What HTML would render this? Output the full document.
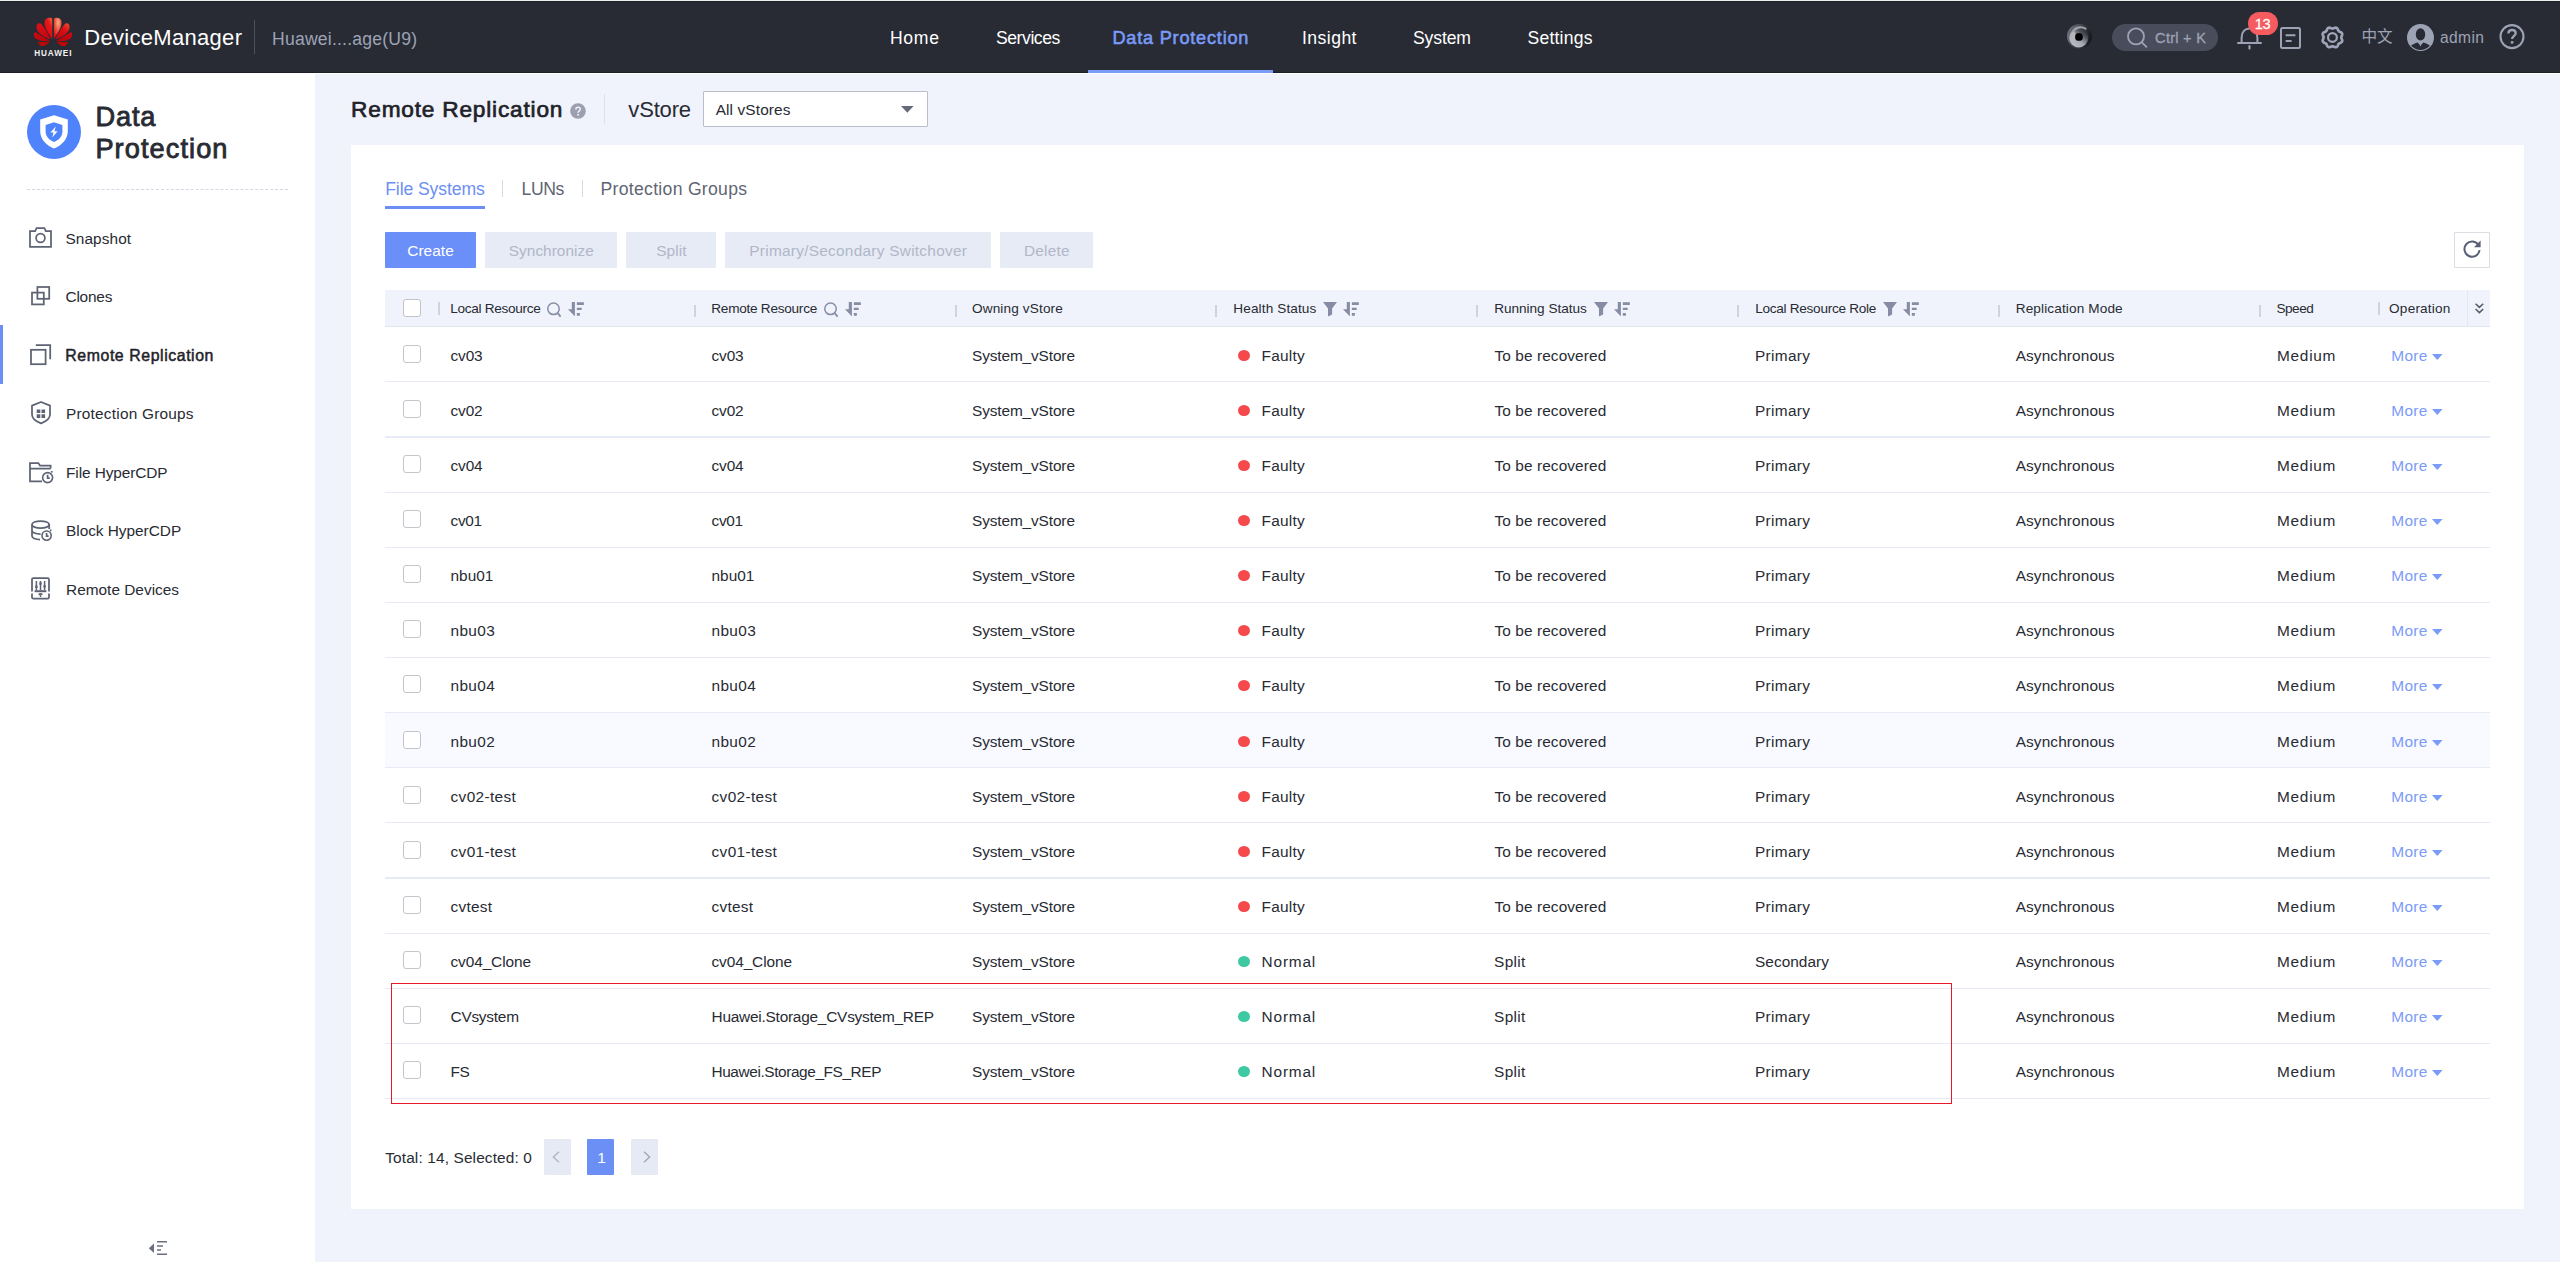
<!DOCTYPE html>
<html lang="en"><head><meta charset="utf-8"><title>DeviceManager - Remote Replication</title>
<style>
*{box-sizing:border-box;margin:0;padding:0}
html,body{width:2560px;height:1262px;overflow:hidden;background:#f0f3fb;font-family:"Liberation Sans","Noto Sans CJK SC",sans-serif;color:#282b33}
.t{position:absolute;white-space:nowrap;line-height:1}
.abs{position:absolute}
#top{position:absolute;left:0;top:0;width:2560px;height:73px;background:#282b34;border-bottom:1px solid #1c1f29}
#side{position:absolute;left:0;top:73px;width:315px;height:1189px;background:#fff}
#card{position:absolute;left:351px;top:145px;width:2173px;height:1064px;background:#fff}
.btn{position:absolute;top:232px;height:36px;border-radius:1px;background:#e6ebf5}
.hsep{position:absolute;top:302px;width:1.5px;height:13px;background:#cfd3df}
.hdr{position:absolute;left:385px;top:290px;width:2105px;height:37px;background:#f0f3fb;border-bottom:1px solid #e1e6f2}
.row{position:absolute;left:385px;width:2105px;border-bottom:1px solid #e6eaf5}
.cb{position:absolute;left:403px;width:18px;height:18px;border:1px solid #c4c5ca;border-radius:3px;background:#fff}
.dot{position:absolute;width:12.4px;height:11.6px;border-radius:50%}
svg{position:absolute;overflow:visible}
</style></head><body>

<header>
<div id="top"></div><div class="abs" style="left:0;top:0;width:2560px;height:1px;background:#eeefef"></div><div class="abs" style="left:0;top:1px;width:2560px;height:1px;background:#1d202a"></div><div class="abs" style="left:315px;top:73px;width:2245px;height:1px;background:#fff"></div>
<svg style="left:0;top:0" width="100" height="73" viewBox="0 0 100 73">
<defs>
<linearGradient id="g1" x1=".9" y1="0" x2=".3" y2=".8"><stop offset="0" stop-color="#f0603a"/><stop offset=".4" stop-color="#e8161a"/><stop offset="1" stop-color="#dc0812"/></linearGradient>
<radialGradient id="g1r" cx=".45" cy=".22" r=".75"><stop offset="0" stop-color="#f8ac90"/><stop offset=".4" stop-color="#ee6a48"/><stop offset="1" stop-color="#e40c14"/></radialGradient>
<linearGradient id="g2" x1="0" y1="0" x2=".6" y2="1"><stop offset="0" stop-color="#e01018"/><stop offset="1" stop-color="#c4060e"/></linearGradient>
<linearGradient id="g2r" x1="0" y1="0" x2=".6" y2="1"><stop offset="0" stop-color="#ee5430"/><stop offset=".45" stop-color="#e00e16"/><stop offset="1" stop-color="#c8060e"/></linearGradient>
<linearGradient id="g3" x1="0" y1="0" x2="1" y2="1"><stop offset="0" stop-color="#cc0a10"/><stop offset="1" stop-color="#b4040a"/></linearGradient>
<linearGradient id="g4" x1="0" y1="0" x2="0" y2="1"><stop offset="0" stop-color="#a80606"/><stop offset="1" stop-color="#cc0a0a"/></linearGradient>
</defs>
<path fill="url(#g1)" d="M52.2 38.9 C47.5 32 43.2 25.5 44.9 20.6 C45.8 18.2 48.5 17.3 51.3 18.1 C52.1 18.4 52.3 19 52.2 20 Z"/>
<path fill="url(#g2)" d="M50.7 39.4 C43.5 37.4 36.8 32.8 36.6 27.6 C36.3 25.4 37.3 23.7 39 23.2 C40.2 23 41 23.4 41.8 24.4 C45 28.6 48.6 33.8 50.7 39.4 Z"/>
<path fill="url(#g3)" d="M50 41.1 C43 41.9 36 40.4 34.3 36.4 C33.6 34.9 33.8 33.4 34.5 32.5 C35.3 32.2 36 32.4 36.8 32.9 C41 35.4 45.8 38 50 41.1 Z"/>
<path fill="url(#g4)" d="M49.7 41.4 C47.6 44.4 44.6 46.2 42 46 C40.4 45.8 38.8 44 37.8 41.9 C41.6 42.2 45.8 42 49.7 41.4 Z"/>
<g transform="translate(106.1,0) scale(-1,1)">
<path fill="url(#g1r)" d="M52.2 38.9 C47.5 32 43.2 25.5 44.9 20.6 C45.8 18.2 48.5 17.3 51.3 18.1 C52.1 18.4 52.3 19 52.2 20 Z"/>
<path fill="url(#g2r)" d="M50.7 39.4 C43.5 37.4 36.8 32.8 36.6 27.6 C36.3 25.4 37.3 23.7 39 23.2 C40.2 23 41 23.4 41.8 24.4 C45 28.6 48.6 33.8 50.7 39.4 Z"/>
<path fill="url(#g3)" d="M50 41.1 C43 41.9 36 40.4 34.3 36.4 C33.6 34.9 33.8 33.4 34.5 32.5 C35.3 32.2 36 32.4 36.8 32.9 C41 35.4 45.8 38 50 41.1 Z"/>
<path fill="url(#g4)" d="M49.7 41.4 C47.6 44.4 44.6 46.2 42 46 C40.4 45.8 38.8 44 37.8 41.9 C41.6 42.2 45.8 42 49.7 41.4 Z"/>
</g>
</svg>
<span class="t " style="left:34.20px;top:50px;font-size:8.2px;color:#f2f2f2;letter-spacing:0.900px;font-weight:bold;">HUAWEI</span>
<span class="t " style="left:84.30px;top:27px;font-size:22px;color:#fff;letter-spacing:0.299px;">DeviceManager</span>
<div class="abs" style="left:254px;top:20px;width:1px;height:34px;background:#4d505b"></div>
<span class="t " style="left:272.00px;top:31px;font-size:17.6px;color:#9da3b5;letter-spacing:0.209px;">Huawei....age(U9)</span>
<span class="t " style="left:890.00px;top:30px;font-size:17.6px;color:#fff;letter-spacing:0.669px;">Home</span>
<span class="t " style="left:996.00px;top:30px;font-size:17.6px;color:#fff;letter-spacing:-0.450px;">Services</span>
<span class="t " style="left:1302.00px;top:30px;font-size:17.6px;color:#fff;letter-spacing:0.445px;">Insight</span>
<span class="t " style="left:1413.00px;top:30px;font-size:17.6px;color:#fff;letter-spacing:-0.139px;">System</span>
<span class="t " style="left:1527.50px;top:30px;font-size:17.6px;color:#fff;letter-spacing:0.197px;">Settings</span>
<span class="t " style="left:1112.40px;top:29px;font-size:18.13px;color:#7a9bf8;letter-spacing:0.802px;-webkit-text-stroke:0.56px #7a9bf8;">Data Protection</span>
<div class="abs" style="left:1088px;top:70px;width:185px;height:3px;background:#7a9bf8"></div>
<svg style="left:2066px;top:23px" width="27" height="27" viewBox="0 0 27 27">
<defs><linearGradient id="eo" x1="0" y1=".35" x2="1" y2=".65"><stop offset="0" stop-color="#70727c"/><stop offset=".55" stop-color="#3c3e47"/><stop offset="1" stop-color="#121317"/></linearGradient>
<linearGradient id="ei" x1=".1" y1=".9" x2=".85" y2=".1"><stop offset="0" stop-color="#c0c0ce"/><stop offset=".45" stop-color="#a4a5b2"/><stop offset=".8" stop-color="#4a4c56"/><stop offset="1" stop-color="#2e3039"/></linearGradient>
<filter id="eb" x="-20%" y="-20%" width="140%" height="140%"><feGaussianBlur stdDeviation=".45"/></filter></defs>
<g filter="url(#eb)"><circle cx="13.4" cy="13.3" r="12.4" fill="url(#eo)"/>
<circle cx="12.8" cy="14.8" r="9.6" fill="url(#ei)"/>
<path d="M6.4 9.4 A 9.2 9.2 0 0 1 19.4 5.6" fill="none" stroke="#9fa0a8" stroke-width="2.2" stroke-linecap="round"/>
<path d="M6.2 9.6 C8.6 7.4 10 10.6 9 13 C8 16 7.6 19 9.2 21.6 C5 19.4 3.6 13.6 6.2 9.6 Z" fill="#b6b6ba"/>
<circle cx="13" cy="13.9" r="3.9" fill="#020203"/></g></svg>
<div class="abs" style="left:2112px;top:24px;width:106px;height:27px;border-radius:14px;background:#494d5b"></div>
<svg style="left:2126px;top:27px" width="22" height="22" viewBox="0 0 22 22"><circle cx="10" cy="9.4" r="8" fill="none" stroke="#9da3b5" stroke-width="1.8"/><path d="M15.6 15.2 L20.4 19.8" stroke="#9da3b5" stroke-width="1.8" stroke-linecap="round"/></svg>
<span class="t " style="left:2155.10px;top:31px;font-size:14.6px;color:#9da3b5;letter-spacing:0.249px;-webkit-text-stroke:.3px #9da3b5;">Ctrl + K</span>
<svg style="left:2237px;top:26px" width="26" height="25" viewBox="0 0 26 25"><path d="M4.6 16.8 V11.5 C4.6 6 8 2.4 12.5 2.4 C17 2.4 20.4 6 20.4 11.5 V16.8" fill="none" stroke="#9da3b5" stroke-width="2"/><path d="M1 17 H24" stroke="#9da3b5" stroke-width="2" stroke-linecap="round"/><path d="M12.5 20 V22.6" stroke="#9da3b5" stroke-width="2.2" stroke-linecap="round"/></svg>
<div class="abs" style="left:2248px;top:11.5px;width:29.5px;height:23.5px;border-radius:12px;background:#f55b5f"></div>
<span class="t " style="left:2254.80px;top:17px;font-size:14.6px;color:#fff;letter-spacing:-0.450px;-webkit-text-stroke:.3px #fff;">13</span>
<svg style="left:2280px;top:27px" width="21" height="22" viewBox="0 0 21 22"><rect x="1" y="1" width="19" height="20" rx="1.5" fill="none" stroke="#9da3b5" stroke-width="2"/><path d="M5.6 8.2 H15.4 M5.6 14 H11.6" stroke="#9da3b5" stroke-width="2"/></svg>
<svg style="left:2320px;top:25px" width="25" height="25" viewBox="0 0 25 25"><path d="M12.45 3.55 L12.80 3.52 L13.16 3.43 L13.53 3.30 L13.92 3.15 L14.33 2.99 L14.76 2.84 L15.19 2.74 L15.62 2.70 L16.04 2.73 L16.43 2.84 L16.79 3.04 L17.11 3.31 L17.38 3.65 L17.61 4.02 L17.81 4.43 L17.99 4.83 L18.15 5.22 L18.32 5.57 L18.52 5.89 L18.74 6.16 L19.01 6.38 L19.33 6.58 L19.68 6.75 L20.07 6.91 L20.47 7.09 L20.88 7.29 L21.25 7.52 L21.59 7.79 L21.86 8.11 L22.06 8.47 L22.17 8.86 L22.20 9.28 L22.16 9.71 L22.06 10.14 L21.91 10.57 L21.75 10.98 L21.60 11.37 L21.47 11.74 L21.38 12.10 L21.35 12.45 L21.38 12.80 L21.47 13.16 L21.60 13.53 L21.75 13.92 L21.91 14.33 L22.06 14.76 L22.16 15.19 L22.20 15.62 L22.17 16.04 L22.06 16.43 L21.86 16.79 L21.59 17.11 L21.25 17.38 L20.88 17.61 L20.47 17.81 L20.07 17.99 L19.68 18.15 L19.33 18.32 L19.01 18.52 L18.74 18.74 L18.52 19.01 L18.32 19.33 L18.15 19.68 L17.99 20.07 L17.81 20.47 L17.61 20.88 L17.38 21.25 L17.11 21.59 L16.79 21.86 L16.43 22.06 L16.04 22.17 L15.62 22.20 L15.19 22.16 L14.76 22.06 L14.33 21.91 L13.92 21.75 L13.53 21.60 L13.16 21.47 L12.80 21.38 L12.45 21.35 L12.10 21.38 L11.74 21.47 L11.37 21.60 L10.98 21.75 L10.57 21.91 L10.14 22.06 L9.71 22.16 L9.28 22.20 L8.86 22.17 L8.47 22.06 L8.11 21.86 L7.79 21.59 L7.52 21.25 L7.29 20.88 L7.09 20.47 L6.91 20.07 L6.75 19.68 L6.58 19.33 L6.38 19.01 L6.16 18.74 L5.89 18.52 L5.57 18.32 L5.22 18.15 L4.83 17.99 L4.43 17.81 L4.02 17.61 L3.65 17.38 L3.31 17.11 L3.04 16.79 L2.84 16.43 L2.73 16.04 L2.70 15.62 L2.74 15.19 L2.84 14.76 L2.99 14.33 L3.15 13.92 L3.30 13.53 L3.43 13.16 L3.52 12.80 L3.55 12.45 L3.52 12.10 L3.43 11.74 L3.30 11.37 L3.15 10.98 L2.99 10.57 L2.84 10.14 L2.74 9.71 L2.70 9.28 L2.73 8.86 L2.84 8.47 L3.04 8.11 L3.31 7.79 L3.65 7.52 L4.02 7.29 L4.43 7.09 L4.83 6.91 L5.22 6.75 L5.57 6.58 L5.89 6.38 L6.16 6.16 L6.38 5.89 L6.58 5.57 L6.75 5.22 L6.91 4.83 L7.09 4.43 L7.29 4.02 L7.52 3.65 L7.79 3.31 L8.11 3.04 L8.47 2.84 L8.86 2.73 L9.28 2.70 L9.71 2.74 L10.14 2.84 L10.57 2.99 L10.98 3.15 L11.37 3.30 L11.74 3.43 L12.10 3.52Z" fill="none" stroke="#a0a6b9" stroke-width="2.7" stroke-linejoin="round"/><circle cx="12.45" cy="12.45" r="4.4" fill="none" stroke="#a0a6b9" stroke-width="2.2"/></svg>
<span class="t" style="left:2361.5px;top:29.2px;font-size:15.6px;color:#9da3b5">中文</span>
<svg style="left:2407px;top:24px" width="27" height="27" viewBox="0 0 27 27"><defs><clipPath id="ac"><circle cx="13.5" cy="13.5" r="12.4"/></clipPath></defs><circle cx="13.5" cy="13.5" r="13.5" fill="#9da3b5"/><g clip-path="url(#ac)" fill="#282b36"><ellipse cx="13.5" cy="10.4" rx="4.7" ry="6.2"/><path d="M1 27 C2 21.5 6.5 19.6 10.6 18.4 L13.5 21.5 L16.4 18.4 C20.5 19.6 25 21.5 26 27 Z"/></g><path d="M13.5 18.6 L12.6 19.6 L13.1 22 L13.5 22.6 L13.9 22 L14.4 19.6 Z" fill="#9da3b5"/></svg>
<span class="t " style="left:2440.00px;top:30px;font-size:15.6px;color:#9da3b5;letter-spacing:0.373px;">admin</span>
<svg style="left:2498.5px;top:24px" width="26" height="26" viewBox="0 0 26 26"><circle cx="13" cy="12.6" r="11.5" fill="none" stroke="#9da3b5" stroke-width="2.1"/><path d="M9.4 9.4 C9.4 7.2 11 6 13 6 C15.2 6 16.7 7.4 16.7 9.2 C16.7 11.8 13.1 12 13.1 15" fill="none" stroke="#9da3b5" stroke-width="2.3"/><circle cx="13.1" cy="18.4" r="1.45" fill="#9da3b5"/></svg>
</header>
<aside>
<div id="side"></div>
<svg style="left:27px;top:105px" width="54" height="54" viewBox="0 0 54 54"><circle cx="27" cy="27" r="27" fill="#4f83fc"/>
<path d="M27 10.2 L40.8 14.6 V26 C40.8 34.4 34.6 40.4 27 43.6 C19.4 40.4 13.2 34.4 13.2 26 V14.6 Z" fill="#fff"/>
<path d="M27 17.2 L35.4 20 V26.4 C35.4 31.6 31.6 35 27 37 C22.4 35 18.6 31.6 18.6 26.4 V20 Z" fill="#4f83fc"/>
<path d="M28.8 21.4 L23.4 27.6 H26.6 L25.2 32.4 L30.6 26.2 H27.4 Z" fill="#fff"/></svg>
<span class="t " style="left:95.40px;top:103px;font-size:27.19px;color:#282b33;letter-spacing:0.883px;-webkit-text-stroke:0.84px #282b33;">Data</span>
<span class="t " style="left:95.40px;top:135px;font-size:27.19px;color:#282b33;letter-spacing:1.074px;-webkit-text-stroke:0.84px #282b33;">Protection</span>
<div class="abs" style="left:27px;top:189px;width:261px;height:0;border-top:1px dashed #d3d8e6"></div>
<div class="abs" style="left:0;top:325px;width:3px;height:59px;background:#6c8ff5"></div>
<svg style="left:29px;top:227px" width="23" height="21" viewBox="0 0 23 21"><path d="M1 4.2 H6.2 L7.6 1 H15.4 L16.8 4.2 H22 V19.8 H1 Z" fill="none" stroke="#5d6373" stroke-width="1.75" stroke-linejoin="miter"/><circle cx="11.5" cy="11" r="4.4" fill="none" stroke="#5d6373" stroke-width="1.75"/></svg>
<svg style="left:31px;top:285.5px" width="20" height="20" viewBox="0 0 20 20"><rect x="6.4" y="1" width="11.8" height="11.8" fill="none" stroke="#5d6373" stroke-width="1.75"/><rect x="1" y="6.6" width="11.8" height="11.8" fill="none" stroke="#5d6373" stroke-width="1.75"/></svg>
<svg style="left:29.5px;top:344px" width="22" height="21" viewBox="0 0 22 21"><rect x="1" y="5.8" width="14.6" height="14.4" fill="none" stroke="#5d6373" stroke-width="1.75"/><path d="M5.8 1 H20.2 V15.2" fill="none" stroke="#5d6373" stroke-width="1.75"/></svg>
<svg style="left:30.5px;top:401px" width="20" height="23" viewBox="0 0 20 23"><path d="M10 1 L19 4.6 V13.6 C19 17.8 15 20.6 10 22.4 C5 20.6 1 17.8 1 13.6 V4.6 Z" fill="none" stroke="#5d6373" stroke-width="1.75" stroke-linejoin="round"/><path d="M5.7 8.5h3.6v3.6h-3.6z M10.5 8.5h3.6v3.6h-3.6z M5.7 13.3h3.6v3.6h-3.6z M10.5 13.3h3.6v3.6h-3.6z" fill="#5d6373"/></svg>
<svg style="left:29px;top:461.5px" width="25" height="22" viewBox="0 0 25 22"><path d="M13 19.4 H1 V1 H9.4 L11 3.6 H21.6 V6.6 M1 6.6 H21.6" fill="none" stroke="#5d6373" stroke-width="1.75"/><circle cx="18.6" cy="15.6" r="5" fill="#fff" stroke="#5d6373" stroke-width="1.6"/><path d="M18.6 12.8 V16 H20.8" fill="none" stroke="#5d6373" stroke-width="1.75"/><path d="M22 10 L23.6 9.6" fill="none" stroke="#5d6373" stroke-width="1.75"/></svg>
<svg style="left:30.5px;top:519.5px" width="22" height="22" viewBox="0 0 22 22"><ellipse cx="9.6" cy="4.6" rx="8.6" ry="3.6" fill="none" stroke="#5d6373" stroke-width="1.75"/><path d="M1 4.6 V16 C1 18 4.4 19.6 9 19.6 M18.2 4.6 V9 M1 10.4 C1 12.4 4.6 14 9.6 14" fill="none" stroke="#5d6373" stroke-width="1.75"/><circle cx="15.6" cy="15.6" r="4.6" fill="#fff" stroke="#5d6373" stroke-width="1.6"/><path d="M15.6 13 V16 H17.6" fill="none" stroke="#5d6373" stroke-width="1.75"/><path d="M19 10.6 L20.4 10.2" fill="none" stroke="#5d6373" stroke-width="1.75"/></svg>
<svg style="left:31px;top:577px" width="19" height="23" viewBox="0 0 19 23"><path d="M1 14.6 V2.4 C1 1.6 1.6 1 2.4 1 H16.6 C17.4 1 18 1.6 18 2.4 V14.6 M18 16.4 V20.2 C18 21 17.4 21.6 16.6 21.6 H2.4 C1.6 21.6 1 21 1 20.2 V16.4" fill="none" stroke="#5d6373" stroke-width="1.75"/><path d="M3.6 14.2 H15.4" stroke="#5d6373" stroke-width="2"/><path d="M5.4 4 V13 M9.5 4 V13 M13.6 4 V13" stroke="#5d6373" stroke-width="1.5"/><path d="M4.2 8.6h2.4v2.4h-2.4z M8.3 5.4h2.4v2.4h-2.4z M12.4 8.2h2.4v2.4h-2.4z" fill="#5d6373"/><path d="M7.6 17.6 C8.8 16.6 10.2 16.6 11.4 17.6" fill="none" stroke="#5d6373" stroke-width="1.75" stroke-width="1.3"/><circle cx="9.5" cy="19" r=".9" fill="#5d6373"/></svg>
<span class="t " style="left:65.50px;top:231px;font-size:15.4px;color:#282b33;letter-spacing:0.076px;">Snapshot</span>
<span class="t " style="left:65.50px;top:289px;font-size:15.4px;color:#282b33;letter-spacing:-0.214px;">Clones</span>
<span class="t " style="left:65.30px;top:348px;font-size:15.86px;color:#1f2229;letter-spacing:0.572px;-webkit-text-stroke:0.49px #1f2229;">Remote Replication</span>
<span class="t " style="left:66.00px;top:406px;font-size:15.4px;color:#282b33;letter-spacing:0.217px;">Protection Groups</span>
<span class="t " style="left:66.00px;top:465px;font-size:15.4px;color:#282b33;letter-spacing:-0.085px;">File HyperCDP</span>
<span class="t " style="left:66.00px;top:523px;font-size:15.4px;color:#282b33;letter-spacing:-0.023px;">Block HyperCDP</span>
<span class="t " style="left:66.00px;top:582px;font-size:15.4px;color:#282b33;letter-spacing:0.011px;">Remote Devices</span>
<svg style="left:148px;top:1240px" width="20" height="16" viewBox="0 0 20 16"><path d="M0.8 8.2 L6 3.4 V13 Z" fill="#6b7080"/><path d="M9 1.8 H19 M9 6 H15 M9 10 H13 M9 14.2 H19" stroke="#6b7080" stroke-width="1.6"/></svg>
</aside>
<main>
<span class="t " style="left:351.10px;top:98px;font-size:22.66px;color:#1f2229;letter-spacing:0.799px;-webkit-text-stroke:0.70px #1f2229;">Remote Replication</span>
<svg style="left:570px;top:103px" width="16" height="16" viewBox="0 0 16 16"><circle cx="8" cy="8" r="7.8" fill="#9b9fb0"/><path d="M5.9 6.4 C5.9 5 6.9 4.3 8.1 4.3 C9.4 4.3 10.3 5.1 10.3 6.2 C10.3 7.8 8.1 7.9 8.1 9.7" fill="none" stroke="#f0f3fb" stroke-width="1.5"/><circle cx="8.1" cy="11.8" r=".95" fill="#f0f3fb"/></svg>
<div class="abs" style="left:604px;top:94px;width:1px;height:30px;background:#dde1ec"></div>
<span class="t " style="left:628.30px;top:99px;font-size:22px;color:#282b33;letter-spacing:-0.156px;">vStore</span>
<div class="abs" style="left:703px;top:91px;width:225px;height:36px;background:#fff;border:1px solid #b9bdcc;border-radius:1px"></div>
<span class="t " style="left:715.70px;top:102px;font-size:15.4px;color:#282b33;letter-spacing:0.119px;">All vStores</span>
<svg style="left:900.5px;top:105.5px" width="13" height="7" viewBox="0 0 13 7"><path d="M0 0 H12.6 L6.3 6.8 Z" fill="#666b7b"/></svg>
<div id="card"></div>
<span class="t " style="left:385.20px;top:181px;font-size:17.6px;color:#6c8ff5;letter-spacing:-0.105px;">File Systems</span>
<div class="abs" style="left:385px;top:206px;width:100px;height:3px;background:#6c8ff5"></div>
<div class="abs" style="left:502px;top:180px;width:1px;height:17px;background:#d5d9e4"></div>
<span class="t " style="left:521.60px;top:181px;font-size:17.6px;color:#5f6572;letter-spacing:-0.450px;">LUNs</span>
<div class="abs" style="left:582px;top:180px;width:1px;height:17px;background:#d5d9e4"></div>
<span class="t " style="left:600.60px;top:181px;font-size:17.6px;color:#5f6572;letter-spacing:0.290px;">Protection Groups</span>
<div class="btn" style="left:385px;width:91px;background:#6b8ff8"></div>
<span class="t " style="left:407.30px;top:243px;font-size:15.4px;color:#fff;letter-spacing:0.040px;">Create</span>
<div class="btn" style="left:485px;width:132px;background:#e6ebf5"></div>
<span class="t " style="left:508.80px;top:243px;font-size:15.4px;color:#b1b7c8;letter-spacing:0.022px;">Synchronize</span>
<div class="btn" style="left:626px;width:90px;background:#e6ebf5"></div>
<span class="t " style="left:656.20px;top:243px;font-size:15.4px;color:#b1b7c8;letter-spacing:0.112px;">Split</span>
<div class="btn" style="left:725px;width:266px;background:#e6ebf5"></div>
<span class="t " style="left:749.30px;top:243px;font-size:15.4px;color:#b1b7c8;letter-spacing:0.266px;">Primary/Secondary Switchover</span>
<div class="btn" style="left:1000px;width:93px;background:#e6ebf5"></div>
<span class="t " style="left:1024.00px;top:243px;font-size:15.4px;color:#b1b7c8;letter-spacing:0.219px;">Delete</span>
<div class="abs" style="left:2454px;top:232px;width:36px;height:36px;border:1px solid #dcdde2;border-radius:1px;background:#fff"></div>
<svg style="left:2462px;top:239px" width="20" height="20" viewBox="0 0 20 20"><path d="M16.6 6.2 A7.6 7.6 0 1 0 17.6 11.2" fill="none" stroke="#596076" stroke-width="2"/><path d="M18.6 1.6 V8.2 H12 Z" fill="#596076"/></svg>
<div class="hdr"></div>
<div class="cb" style="top:299px"></div>
<div class="hsep" style="left:438px;top:302px;height:13px"></div>
<div class="hsep" style="left:694px;top:304.5px;height:12px"></div>
<div class="hsep" style="left:955px;top:304.5px;height:12px"></div>
<div class="hsep" style="left:1215px;top:304.5px;height:12px"></div>
<div class="hsep" style="left:1476px;top:304.5px;height:12px"></div>
<div class="hsep" style="left:1737px;top:304.5px;height:12px"></div>
<div class="hsep" style="left:1998px;top:304.5px;height:12px"></div>
<div class="hsep" style="left:2259px;top:304.5px;height:12px"></div>
<div class="hsep" style="left:2378px;top:302px;height:13px"></div>
<div class="abs" style="left:2467px;top:290px;width:1px;height:36px;background:#e3e7f2"></div>
<span class="t " style="left:450.30px;top:302px;font-size:13.6px;color:#282b33;letter-spacing:-0.302px;">Local Resource</span>
<svg style="left:547.3px;top:301.5px" width="15" height="16" viewBox="0 0 15 16"><circle cx="6.5" cy="6.8" r="5.75" fill="none" stroke="#868ca3" stroke-width="1.5"/><path d="M10.7 11.1 L13.6 14.6" stroke="#868ca3" stroke-width="1.8"/></svg>
<svg style="left:568.1px;top:302px" width="17" height="15" viewBox="0 0 17 15"><path d="M3.8 0.1 H6.9 V13.9 H6.5 L0 7.2 H3.8 Z" fill="#868ca3"/><path d="M8.85 0.3 H15.85 V2.9 H8.85 Z M8.85 5.75 H13.7 V8.1 H8.85 Z M8.85 11.1 H11.85 V13.85 H8.85 Z" fill="#868ca3"/></svg>
<span class="t " style="left:711.30px;top:302px;font-size:13.6px;color:#282b33;letter-spacing:-0.258px;">Remote Resource</span>
<svg style="left:823.7px;top:301.5px" width="15" height="16" viewBox="0 0 15 16"><circle cx="6.5" cy="6.8" r="5.75" fill="none" stroke="#868ca3" stroke-width="1.5"/><path d="M10.7 11.1 L13.6 14.6" stroke="#868ca3" stroke-width="1.8"/></svg>
<svg style="left:844.5px;top:302px" width="17" height="15" viewBox="0 0 17 15"><path d="M3.8 0.1 H6.9 V13.9 H6.5 L0 7.2 H3.8 Z" fill="#868ca3"/><path d="M8.85 0.3 H15.85 V2.9 H8.85 Z M8.85 5.75 H13.7 V8.1 H8.85 Z M8.85 11.1 H11.85 V13.85 H8.85 Z" fill="#868ca3"/></svg>
<span class="t " style="left:972.00px;top:302px;font-size:13.6px;color:#282b33;letter-spacing:0.140px;">Owning vStore</span>
<span class="t " style="left:1233.30px;top:302px;font-size:13.6px;color:#282b33;letter-spacing:0.119px;">Health Status</span>
<svg style="left:1323.0px;top:301.8px" width="14" height="15" viewBox="0 0 14 15"><path d="M0 0 H14 L9.1 6.4 V12.6 L5 14.4 V6.4 Z" fill="#868ca3"/></svg>
<svg style="left:1343.1px;top:302px" width="17" height="15" viewBox="0 0 17 15"><path d="M3.8 0.1 H6.9 V13.9 H6.5 L0 7.2 H3.8 Z" fill="#868ca3"/><path d="M8.85 0.3 H15.85 V2.9 H8.85 Z M8.85 5.75 H13.7 V8.1 H8.85 Z M8.85 11.1 H11.85 V13.85 H8.85 Z" fill="#868ca3"/></svg>
<span class="t " style="left:1494.20px;top:302px;font-size:13.6px;color:#282b33;letter-spacing:-0.025px;">Running Status</span>
<svg style="left:1593.5px;top:301.8px" width="14" height="15" viewBox="0 0 14 15"><path d="M0 0 H14 L9.1 6.4 V12.6 L5 14.4 V6.4 Z" fill="#868ca3"/></svg>
<svg style="left:1613.6px;top:302px" width="17" height="15" viewBox="0 0 17 15"><path d="M3.8 0.1 H6.9 V13.9 H6.5 L0 7.2 H3.8 Z" fill="#868ca3"/><path d="M8.85 0.3 H15.85 V2.9 H8.85 Z M8.85 5.75 H13.7 V8.1 H8.85 Z M8.85 11.1 H11.85 V13.85 H8.85 Z" fill="#868ca3"/></svg>
<span class="t " style="left:1755.20px;top:302px;font-size:13.6px;color:#282b33;letter-spacing:-0.282px;">Local Resource Role</span>
<svg style="left:1883.0px;top:301.8px" width="14" height="15" viewBox="0 0 14 15"><path d="M0 0 H14 L9.1 6.4 V12.6 L5 14.4 V6.4 Z" fill="#868ca3"/></svg>
<svg style="left:1903.1px;top:302px" width="17" height="15" viewBox="0 0 17 15"><path d="M3.8 0.1 H6.9 V13.9 H6.5 L0 7.2 H3.8 Z" fill="#868ca3"/><path d="M8.85 0.3 H15.85 V2.9 H8.85 Z M8.85 5.75 H13.7 V8.1 H8.85 Z M8.85 11.1 H11.85 V13.85 H8.85 Z" fill="#868ca3"/></svg>
<span class="t " style="left:2015.70px;top:302px;font-size:13.6px;color:#282b33;letter-spacing:0.129px;">Replication Mode</span>
<span class="t " style="left:2276.40px;top:302px;font-size:13.6px;color:#282b33;letter-spacing:-0.450px;">Speed</span>
<span class="t " style="left:2389.10px;top:302px;font-size:13.6px;color:#282b33;letter-spacing:0.200px;">Operation</span>
<svg style="left:2475px;top:302.5px" width="9" height="11" viewBox="0 0 9 11"><path d="M0.6 0.8 L4.4 4.4 L8.2 0.8 M0.6 6 L4.4 9.6 L8.2 6" fill="none" stroke="#555a68" stroke-width="1.5"/></svg>
<div class="row" style="top:327px;height:55px;background:#fff;"></div>
<div class="cb" style="top:345px"></div>
<span class="t " style="left:450.50px;top:348px;font-size:15.4px;color:#282b33;letter-spacing:-0.131px;">cv03</span>
<span class="t " style="left:711.50px;top:348px;font-size:15.4px;color:#282b33;letter-spacing:-0.131px;">cv03</span>
<span class="t " style="left:972.00px;top:348px;font-size:15.4px;color:#282b33;letter-spacing:-0.118px;">System_vStore</span>
<div class="dot" style="left:1237.9px;top:349.7px;background:#f5494c"></div>
<span class="t " style="left:1261.60px;top:348px;font-size:15.4px;color:#282b33;letter-spacing:0.227px;">Faulty</span>
<span class="t " style="left:1494.40px;top:348px;font-size:15.4px;color:#282b33;letter-spacing:0.106px;">To be recovered</span>
<span class="t " style="left:1755.00px;top:348px;font-size:15.4px;color:#282b33;letter-spacing:0.324px;">Primary</span>
<span class="t " style="left:2015.70px;top:348px;font-size:15.4px;color:#282b33;letter-spacing:0.113px;">Asynchronous</span>
<span class="t " style="left:2277.00px;top:348px;font-size:15.4px;color:#282b33;letter-spacing:0.731px;">Medium</span>
<span class="t " style="left:2391.30px;top:348px;font-size:15.4px;color:#7b9bf8;letter-spacing:0.296px;">More</span>
<svg style="left:2431.8px;top:353.6px" width="11" height="6" viewBox="0 0 11 6"><path d="M0 0 H10.6 L5.3 6 Z" fill="#7b9bf8"/></svg>
<div class="row" style="top:382px;height:56px;background:#fff;border-bottom:2px solid #e7ebf6;"></div>
<div class="cb" style="top:400px"></div>
<span class="t " style="left:450.50px;top:403px;font-size:15.4px;color:#282b33;letter-spacing:-0.131px;">cv02</span>
<span class="t " style="left:711.50px;top:403px;font-size:15.4px;color:#282b33;letter-spacing:-0.131px;">cv02</span>
<span class="t " style="left:972.00px;top:403px;font-size:15.4px;color:#282b33;letter-spacing:-0.118px;">System_vStore</span>
<div class="dot" style="left:1237.9px;top:404.7px;background:#f5494c"></div>
<span class="t " style="left:1261.60px;top:403px;font-size:15.4px;color:#282b33;letter-spacing:0.227px;">Faulty</span>
<span class="t " style="left:1494.40px;top:403px;font-size:15.4px;color:#282b33;letter-spacing:0.106px;">To be recovered</span>
<span class="t " style="left:1755.00px;top:403px;font-size:15.4px;color:#282b33;letter-spacing:0.324px;">Primary</span>
<span class="t " style="left:2015.70px;top:403px;font-size:15.4px;color:#282b33;letter-spacing:0.113px;">Asynchronous</span>
<span class="t " style="left:2277.00px;top:403px;font-size:15.4px;color:#282b33;letter-spacing:0.731px;">Medium</span>
<span class="t " style="left:2391.30px;top:403px;font-size:15.4px;color:#7b9bf8;letter-spacing:0.296px;">More</span>
<svg style="left:2431.8px;top:408.6px" width="11" height="6" viewBox="0 0 11 6"><path d="M0 0 H10.6 L5.3 6 Z" fill="#7b9bf8"/></svg>
<div class="row" style="top:438px;height:55px;background:#fff;"></div>
<div class="cb" style="top:455px"></div>
<span class="t " style="left:450.50px;top:458px;font-size:15.4px;color:#282b33;letter-spacing:-0.131px;">cv04</span>
<span class="t " style="left:711.50px;top:458px;font-size:15.4px;color:#282b33;letter-spacing:-0.131px;">cv04</span>
<span class="t " style="left:972.00px;top:458px;font-size:15.4px;color:#282b33;letter-spacing:-0.118px;">System_vStore</span>
<div class="dot" style="left:1237.9px;top:459.7px;background:#f5494c"></div>
<span class="t " style="left:1261.60px;top:458px;font-size:15.4px;color:#282b33;letter-spacing:0.227px;">Faulty</span>
<span class="t " style="left:1494.40px;top:458px;font-size:15.4px;color:#282b33;letter-spacing:0.106px;">To be recovered</span>
<span class="t " style="left:1755.00px;top:458px;font-size:15.4px;color:#282b33;letter-spacing:0.324px;">Primary</span>
<span class="t " style="left:2015.70px;top:458px;font-size:15.4px;color:#282b33;letter-spacing:0.113px;">Asynchronous</span>
<span class="t " style="left:2277.00px;top:458px;font-size:15.4px;color:#282b33;letter-spacing:0.731px;">Medium</span>
<span class="t " style="left:2391.30px;top:458px;font-size:15.4px;color:#7b9bf8;letter-spacing:0.296px;">More</span>
<svg style="left:2431.8px;top:463.6px" width="11" height="6" viewBox="0 0 11 6"><path d="M0 0 H10.6 L5.3 6 Z" fill="#7b9bf8"/></svg>
<div class="row" style="top:493px;height:55px;background:#fff;"></div>
<div class="cb" style="top:510px"></div>
<span class="t " style="left:450.50px;top:513px;font-size:15.4px;color:#282b33;letter-spacing:-0.298px;">cv01</span>
<span class="t " style="left:711.50px;top:513px;font-size:15.4px;color:#282b33;letter-spacing:-0.298px;">cv01</span>
<span class="t " style="left:972.00px;top:513px;font-size:15.4px;color:#282b33;letter-spacing:-0.118px;">System_vStore</span>
<div class="dot" style="left:1237.9px;top:514.7px;background:#f5494c"></div>
<span class="t " style="left:1261.60px;top:513px;font-size:15.4px;color:#282b33;letter-spacing:0.227px;">Faulty</span>
<span class="t " style="left:1494.40px;top:513px;font-size:15.4px;color:#282b33;letter-spacing:0.106px;">To be recovered</span>
<span class="t " style="left:1755.00px;top:513px;font-size:15.4px;color:#282b33;letter-spacing:0.324px;">Primary</span>
<span class="t " style="left:2015.70px;top:513px;font-size:15.4px;color:#282b33;letter-spacing:0.113px;">Asynchronous</span>
<span class="t " style="left:2277.00px;top:513px;font-size:15.4px;color:#282b33;letter-spacing:0.731px;">Medium</span>
<span class="t " style="left:2391.30px;top:513px;font-size:15.4px;color:#7b9bf8;letter-spacing:0.296px;">More</span>
<svg style="left:2431.8px;top:518.6px" width="11" height="6" viewBox="0 0 11 6"><path d="M0 0 H10.6 L5.3 6 Z" fill="#7b9bf8"/></svg>
<div class="row" style="top:548px;height:55px;background:#fff;"></div>
<div class="cb" style="top:565px"></div>
<span class="t " style="left:450.50px;top:568px;font-size:15.4px;color:#282b33;letter-spacing:0.022px;">nbu01</span>
<span class="t " style="left:711.50px;top:568px;font-size:15.4px;color:#282b33;letter-spacing:0.022px;">nbu01</span>
<span class="t " style="left:972.00px;top:568px;font-size:15.4px;color:#282b33;letter-spacing:-0.118px;">System_vStore</span>
<div class="dot" style="left:1237.9px;top:569.7px;background:#f5494c"></div>
<span class="t " style="left:1261.60px;top:568px;font-size:15.4px;color:#282b33;letter-spacing:0.227px;">Faulty</span>
<span class="t " style="left:1494.40px;top:568px;font-size:15.4px;color:#282b33;letter-spacing:0.106px;">To be recovered</span>
<span class="t " style="left:1755.00px;top:568px;font-size:15.4px;color:#282b33;letter-spacing:0.324px;">Primary</span>
<span class="t " style="left:2015.70px;top:568px;font-size:15.4px;color:#282b33;letter-spacing:0.113px;">Asynchronous</span>
<span class="t " style="left:2277.00px;top:568px;font-size:15.4px;color:#282b33;letter-spacing:0.731px;">Medium</span>
<span class="t " style="left:2391.30px;top:568px;font-size:15.4px;color:#7b9bf8;letter-spacing:0.296px;">More</span>
<svg style="left:2431.8px;top:573.6px" width="11" height="6" viewBox="0 0 11 6"><path d="M0 0 H10.6 L5.3 6 Z" fill="#7b9bf8"/></svg>
<div class="row" style="top:603px;height:55px;background:#fff;"></div>
<div class="cb" style="top:620px"></div>
<span class="t " style="left:450.50px;top:623px;font-size:15.4px;color:#282b33;letter-spacing:0.372px;">nbu03</span>
<span class="t " style="left:711.50px;top:623px;font-size:15.4px;color:#282b33;letter-spacing:0.372px;">nbu03</span>
<span class="t " style="left:972.00px;top:623px;font-size:15.4px;color:#282b33;letter-spacing:-0.118px;">System_vStore</span>
<div class="dot" style="left:1237.9px;top:624.7px;background:#f5494c"></div>
<span class="t " style="left:1261.60px;top:623px;font-size:15.4px;color:#282b33;letter-spacing:0.227px;">Faulty</span>
<span class="t " style="left:1494.40px;top:623px;font-size:15.4px;color:#282b33;letter-spacing:0.106px;">To be recovered</span>
<span class="t " style="left:1755.00px;top:623px;font-size:15.4px;color:#282b33;letter-spacing:0.324px;">Primary</span>
<span class="t " style="left:2015.70px;top:623px;font-size:15.4px;color:#282b33;letter-spacing:0.113px;">Asynchronous</span>
<span class="t " style="left:2277.00px;top:623px;font-size:15.4px;color:#282b33;letter-spacing:0.731px;">Medium</span>
<span class="t " style="left:2391.30px;top:623px;font-size:15.4px;color:#7b9bf8;letter-spacing:0.296px;">More</span>
<svg style="left:2431.8px;top:628.6px" width="11" height="6" viewBox="0 0 11 6"><path d="M0 0 H10.6 L5.3 6 Z" fill="#7b9bf8"/></svg>
<div class="row" style="top:658px;height:55px;background:#fff;"></div>
<div class="cb" style="top:675px"></div>
<span class="t " style="left:450.50px;top:678px;font-size:15.4px;color:#282b33;letter-spacing:0.372px;">nbu04</span>
<span class="t " style="left:711.50px;top:678px;font-size:15.4px;color:#282b33;letter-spacing:0.372px;">nbu04</span>
<span class="t " style="left:972.00px;top:678px;font-size:15.4px;color:#282b33;letter-spacing:-0.118px;">System_vStore</span>
<div class="dot" style="left:1237.9px;top:679.7px;background:#f5494c"></div>
<span class="t " style="left:1261.60px;top:678px;font-size:15.4px;color:#282b33;letter-spacing:0.227px;">Faulty</span>
<span class="t " style="left:1494.40px;top:678px;font-size:15.4px;color:#282b33;letter-spacing:0.106px;">To be recovered</span>
<span class="t " style="left:1755.00px;top:678px;font-size:15.4px;color:#282b33;letter-spacing:0.324px;">Primary</span>
<span class="t " style="left:2015.70px;top:678px;font-size:15.4px;color:#282b33;letter-spacing:0.113px;">Asynchronous</span>
<span class="t " style="left:2277.00px;top:678px;font-size:15.4px;color:#282b33;letter-spacing:0.731px;">Medium</span>
<span class="t " style="left:2391.30px;top:678px;font-size:15.4px;color:#7b9bf8;letter-spacing:0.296px;">More</span>
<svg style="left:2431.8px;top:683.6px" width="11" height="6" viewBox="0 0 11 6"><path d="M0 0 H10.6 L5.3 6 Z" fill="#7b9bf8"/></svg>
<div class="row" style="top:713px;height:55px;background:#f8faff;"></div>
<div class="cb" style="top:731px"></div>
<span class="t " style="left:450.50px;top:734px;font-size:15.4px;color:#282b33;letter-spacing:0.372px;">nbu02</span>
<span class="t " style="left:711.50px;top:734px;font-size:15.4px;color:#282b33;letter-spacing:0.372px;">nbu02</span>
<span class="t " style="left:972.00px;top:734px;font-size:15.4px;color:#282b33;letter-spacing:-0.118px;">System_vStore</span>
<div class="dot" style="left:1237.9px;top:735.7px;background:#f5494c"></div>
<span class="t " style="left:1261.60px;top:734px;font-size:15.4px;color:#282b33;letter-spacing:0.227px;">Faulty</span>
<span class="t " style="left:1494.40px;top:734px;font-size:15.4px;color:#282b33;letter-spacing:0.106px;">To be recovered</span>
<span class="t " style="left:1755.00px;top:734px;font-size:15.4px;color:#282b33;letter-spacing:0.324px;">Primary</span>
<span class="t " style="left:2015.70px;top:734px;font-size:15.4px;color:#282b33;letter-spacing:0.113px;">Asynchronous</span>
<span class="t " style="left:2277.00px;top:734px;font-size:15.4px;color:#282b33;letter-spacing:0.731px;">Medium</span>
<span class="t " style="left:2391.30px;top:734px;font-size:15.4px;color:#7b9bf8;letter-spacing:0.296px;">More</span>
<svg style="left:2431.8px;top:739.6px" width="11" height="6" viewBox="0 0 11 6"><path d="M0 0 H10.6 L5.3 6 Z" fill="#7b9bf8"/></svg>
<div class="row" style="top:768px;height:55px;background:#fff;"></div>
<div class="cb" style="top:786px"></div>
<span class="t " style="left:450.50px;top:789px;font-size:15.4px;color:#282b33;letter-spacing:0.369px;">cv02-test</span>
<span class="t " style="left:711.50px;top:789px;font-size:15.4px;color:#282b33;letter-spacing:0.369px;">cv02-test</span>
<span class="t " style="left:972.00px;top:789px;font-size:15.4px;color:#282b33;letter-spacing:-0.118px;">System_vStore</span>
<div class="dot" style="left:1237.9px;top:790.7px;background:#f5494c"></div>
<span class="t " style="left:1261.60px;top:789px;font-size:15.4px;color:#282b33;letter-spacing:0.227px;">Faulty</span>
<span class="t " style="left:1494.40px;top:789px;font-size:15.4px;color:#282b33;letter-spacing:0.106px;">To be recovered</span>
<span class="t " style="left:1755.00px;top:789px;font-size:15.4px;color:#282b33;letter-spacing:0.324px;">Primary</span>
<span class="t " style="left:2015.70px;top:789px;font-size:15.4px;color:#282b33;letter-spacing:0.113px;">Asynchronous</span>
<span class="t " style="left:2277.00px;top:789px;font-size:15.4px;color:#282b33;letter-spacing:0.731px;">Medium</span>
<span class="t " style="left:2391.30px;top:789px;font-size:15.4px;color:#7b9bf8;letter-spacing:0.296px;">More</span>
<svg style="left:2431.8px;top:794.6px" width="11" height="6" viewBox="0 0 11 6"><path d="M0 0 H10.6 L5.3 6 Z" fill="#7b9bf8"/></svg>
<div class="row" style="top:823px;height:56px;background:#fff;border-bottom:2px solid #e7ebf6;"></div>
<div class="cb" style="top:841px"></div>
<span class="t " style="left:450.50px;top:844px;font-size:15.4px;color:#282b33;letter-spacing:0.369px;">cv01-test</span>
<span class="t " style="left:711.50px;top:844px;font-size:15.4px;color:#282b33;letter-spacing:0.369px;">cv01-test</span>
<span class="t " style="left:972.00px;top:844px;font-size:15.4px;color:#282b33;letter-spacing:-0.118px;">System_vStore</span>
<div class="dot" style="left:1237.9px;top:845.7px;background:#f5494c"></div>
<span class="t " style="left:1261.60px;top:844px;font-size:15.4px;color:#282b33;letter-spacing:0.227px;">Faulty</span>
<span class="t " style="left:1494.40px;top:844px;font-size:15.4px;color:#282b33;letter-spacing:0.106px;">To be recovered</span>
<span class="t " style="left:1755.00px;top:844px;font-size:15.4px;color:#282b33;letter-spacing:0.324px;">Primary</span>
<span class="t " style="left:2015.70px;top:844px;font-size:15.4px;color:#282b33;letter-spacing:0.113px;">Asynchronous</span>
<span class="t " style="left:2277.00px;top:844px;font-size:15.4px;color:#282b33;letter-spacing:0.731px;">Medium</span>
<span class="t " style="left:2391.30px;top:844px;font-size:15.4px;color:#7b9bf8;letter-spacing:0.296px;">More</span>
<svg style="left:2431.8px;top:849.6px" width="11" height="6" viewBox="0 0 11 6"><path d="M0 0 H10.6 L5.3 6 Z" fill="#7b9bf8"/></svg>
<div class="row" style="top:879px;height:55px;background:#fff;"></div>
<div class="cb" style="top:896px"></div>
<span class="t " style="left:450.50px;top:899px;font-size:15.4px;color:#282b33;letter-spacing:0.281px;">cvtest</span>
<span class="t " style="left:711.50px;top:899px;font-size:15.4px;color:#282b33;letter-spacing:0.281px;">cvtest</span>
<span class="t " style="left:972.00px;top:899px;font-size:15.4px;color:#282b33;letter-spacing:-0.118px;">System_vStore</span>
<div class="dot" style="left:1237.9px;top:900.7px;background:#f5494c"></div>
<span class="t " style="left:1261.60px;top:899px;font-size:15.4px;color:#282b33;letter-spacing:0.227px;">Faulty</span>
<span class="t " style="left:1494.40px;top:899px;font-size:15.4px;color:#282b33;letter-spacing:0.106px;">To be recovered</span>
<span class="t " style="left:1755.00px;top:899px;font-size:15.4px;color:#282b33;letter-spacing:0.324px;">Primary</span>
<span class="t " style="left:2015.70px;top:899px;font-size:15.4px;color:#282b33;letter-spacing:0.113px;">Asynchronous</span>
<span class="t " style="left:2277.00px;top:899px;font-size:15.4px;color:#282b33;letter-spacing:0.731px;">Medium</span>
<span class="t " style="left:2391.30px;top:899px;font-size:15.4px;color:#7b9bf8;letter-spacing:0.296px;">More</span>
<svg style="left:2431.8px;top:904.6px" width="11" height="6" viewBox="0 0 11 6"><path d="M0 0 H10.6 L5.3 6 Z" fill="#7b9bf8"/></svg>
<div class="row" style="top:934px;height:55px;background:#fff;"></div>
<div class="cb" style="top:951px"></div>
<span class="t " style="left:450.50px;top:954px;font-size:15.4px;color:#282b33;letter-spacing:-0.090px;">cv04_Clone</span>
<span class="t " style="left:711.50px;top:954px;font-size:15.4px;color:#282b33;letter-spacing:-0.090px;">cv04_Clone</span>
<span class="t " style="left:972.00px;top:954px;font-size:15.4px;color:#282b33;letter-spacing:-0.118px;">System_vStore</span>
<div class="dot" style="left:1237.9px;top:955.7px;background:#3ec9a2"></div>
<span class="t " style="left:1261.60px;top:954px;font-size:15.4px;color:#282b33;letter-spacing:0.807px;">Normal</span>
<span class="t " style="left:1494.00px;top:954px;font-size:15.4px;color:#282b33;letter-spacing:0.362px;">Split</span>
<span class="t " style="left:1755.00px;top:954px;font-size:15.4px;color:#282b33;letter-spacing:0.036px;">Secondary</span>
<span class="t " style="left:2015.70px;top:954px;font-size:15.4px;color:#282b33;letter-spacing:0.113px;">Asynchronous</span>
<span class="t " style="left:2277.00px;top:954px;font-size:15.4px;color:#282b33;letter-spacing:0.731px;">Medium</span>
<span class="t " style="left:2391.30px;top:954px;font-size:15.4px;color:#7b9bf8;letter-spacing:0.296px;">More</span>
<svg style="left:2431.8px;top:959.6px" width="11" height="6" viewBox="0 0 11 6"><path d="M0 0 H10.6 L5.3 6 Z" fill="#7b9bf8"/></svg>
<div class="row" style="top:989px;height:55px;background:#fff;"></div>
<div class="cb" style="top:1006px"></div>
<span class="t " style="left:450.50px;top:1009px;font-size:15.4px;color:#282b33;letter-spacing:-0.235px;">CVsystem</span>
<span class="t " style="left:711.50px;top:1009px;font-size:15.4px;color:#282b33;letter-spacing:-0.224px;">Huawei.Storage_CVsystem_REP</span>
<span class="t " style="left:972.00px;top:1009px;font-size:15.4px;color:#282b33;letter-spacing:-0.118px;">System_vStore</span>
<div class="dot" style="left:1237.9px;top:1010.7px;background:#3ec9a2"></div>
<span class="t " style="left:1261.60px;top:1009px;font-size:15.4px;color:#282b33;letter-spacing:0.807px;">Normal</span>
<span class="t " style="left:1494.00px;top:1009px;font-size:15.4px;color:#282b33;letter-spacing:0.362px;">Split</span>
<span class="t " style="left:1755.00px;top:1009px;font-size:15.4px;color:#282b33;letter-spacing:0.324px;">Primary</span>
<span class="t " style="left:2015.70px;top:1009px;font-size:15.4px;color:#282b33;letter-spacing:0.113px;">Asynchronous</span>
<span class="t " style="left:2277.00px;top:1009px;font-size:15.4px;color:#282b33;letter-spacing:0.731px;">Medium</span>
<span class="t " style="left:2391.30px;top:1009px;font-size:15.4px;color:#7b9bf8;letter-spacing:0.296px;">More</span>
<svg style="left:2431.8px;top:1014.6px" width="11" height="6" viewBox="0 0 11 6"><path d="M0 0 H10.6 L5.3 6 Z" fill="#7b9bf8"/></svg>
<div class="row" style="top:1044px;height:55px;background:#fff;"></div>
<div class="cb" style="top:1061px"></div>
<span class="t " style="left:450.50px;top:1064px;font-size:15.4px;color:#282b33;letter-spacing:-0.450px;">FS</span>
<span class="t " style="left:711.50px;top:1064px;font-size:15.4px;color:#282b33;letter-spacing:-0.401px;">Huawei.Storage_FS_REP</span>
<span class="t " style="left:972.00px;top:1064px;font-size:15.4px;color:#282b33;letter-spacing:-0.118px;">System_vStore</span>
<div class="dot" style="left:1237.9px;top:1065.7px;background:#3ec9a2"></div>
<span class="t " style="left:1261.60px;top:1064px;font-size:15.4px;color:#282b33;letter-spacing:0.807px;">Normal</span>
<span class="t " style="left:1494.00px;top:1064px;font-size:15.4px;color:#282b33;letter-spacing:0.362px;">Split</span>
<span class="t " style="left:1755.00px;top:1064px;font-size:15.4px;color:#282b33;letter-spacing:0.324px;">Primary</span>
<span class="t " style="left:2015.70px;top:1064px;font-size:15.4px;color:#282b33;letter-spacing:0.113px;">Asynchronous</span>
<span class="t " style="left:2277.00px;top:1064px;font-size:15.4px;color:#282b33;letter-spacing:0.731px;">Medium</span>
<span class="t " style="left:2391.30px;top:1064px;font-size:15.4px;color:#7b9bf8;letter-spacing:0.296px;">More</span>
<svg style="left:2431.8px;top:1069.6px" width="11" height="6" viewBox="0 0 11 6"><path d="M0 0 H10.6 L5.3 6 Z" fill="#7b9bf8"/></svg>
<div class="abs" style="left:391px;top:983px;width:1561px;height:121px;border:1px solid #e8182a"></div>
<span class="t " style="left:385.20px;top:1150px;font-size:15.4px;color:#282b33;letter-spacing:0.141px;">Total: 14, Selected: 0</span>
<div class="abs" style="left:544px;top:1139px;width:27px;height:36px;background:#e6eaf5;border-radius:1px"></div>
<div class="abs" style="left:587px;top:1139px;width:27px;height:36px;background:#6b8ff5;border-radius:1px"></div>
<div class="abs" style="left:631px;top:1139px;width:27px;height:36px;background:#e6eaf5;border-radius:1px"></div>
<svg style="left:552px;top:1151px" width="8" height="12" viewBox="0 0 8 12"><path d="M7 0.8 L1.4 6 L7 11.2" fill="none" stroke="#b1b7c8" stroke-width="1.5"/></svg>
<svg style="left:643px;top:1151px" width="8" height="12" viewBox="0 0 8 12"><path d="M1 0.8 L6.6 6 L1 11.2" fill="none" stroke="#a3a9ba" stroke-width="1.5"/></svg>
<span class="t " style="left:597.30px;top:1150px;font-size:15.4px;color:#fff;">1</span>
</main>
</body></html>
